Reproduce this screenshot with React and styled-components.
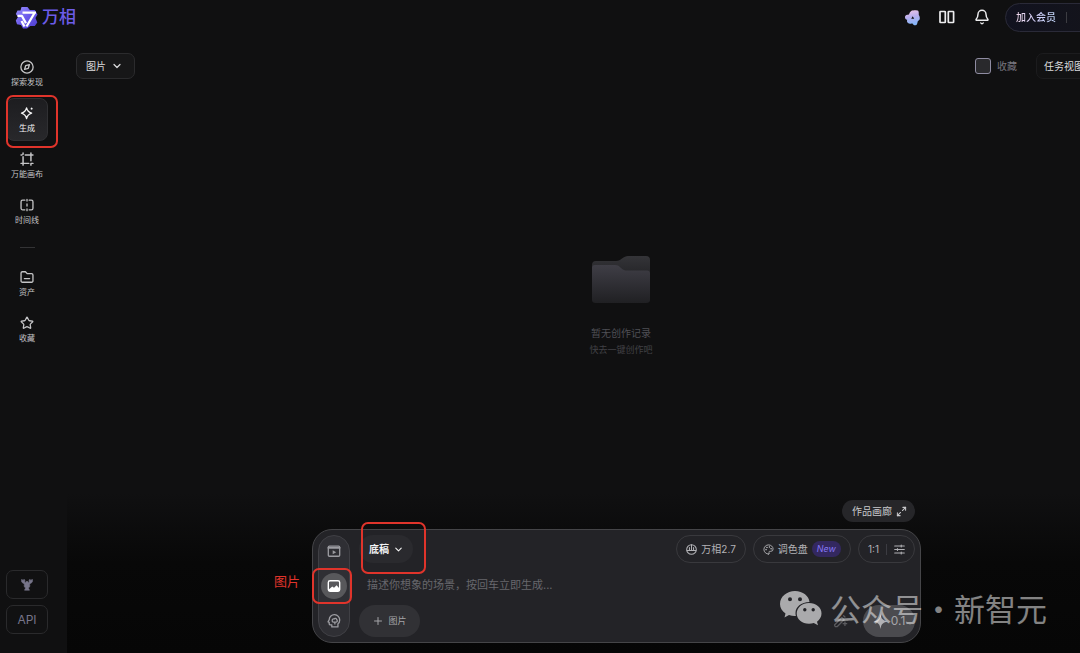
import React from "react";
import styled, { createGlobalStyle, css } from "styled-components";
import { Bell, ChevronDown, Maximize2, Palette, Plus, Star } from "lucide-react";

const Global = createGlobalStyle`
  *, *::before, *::after { box-sizing: border-box; }
  html, body { margin: 0; background: #101011; overflow-x: hidden; }
  body, button, textarea, input {
    font-family: Inter, "Liberation Sans", "Noto Sans CJK SC", sans-serif;
    line-height: 16px;
  }
  button { margin: 0; padding: 0; border: 0; background: none; color: inherit; cursor: pointer; }
  a { color: inherit; text-decoration: none; }
  svg { display: block; flex: none; }
`;

const RED = "#e0342b";

const Page = styled.div`
  position: relative;
  display: flex;
  flex-direction: column;
  min-height: 100vh;
  overflow: hidden;
  background: #101011;
  color: #d6d6d9;
`;

const Header = styled.header`
  display: flex;
  align-items: center;
  justify-content: space-between;
  height: 34px;
  padding-left: 15px;
`;

const Brand = styled.a`
  display: flex;
  align-items: center;
  gap: 4px;
  color: #6c5ce8;
  font-size: 17px;
  line-height: 24px;
  font-weight: 500;
`;

const HeaderActions = styled.div`
  display: flex;
  align-items: center;
  gap: 17px;
  margin-right: -20px;
`;

const IconButton = styled.button`
  display: grid;
  place-items: center;
  width: 18px;
  height: 18px;
  color: #ececee;
`;

const MemberPill = styled.button`
  display: flex;
  align-items: center;
  gap: 10px;
  height: 29px;
  padding: 0 32px 0 10px;
  margin-left: -3px;
  border: 1px solid #2a2a38;
  border-radius: 15px;
  background: linear-gradient(90deg, #11121f, #14141b);
  font-size: 10px;
  font-weight: 500;
  white-space: nowrap;
`;

const MemberText = styled.span`
  background: linear-gradient(90deg, #f0d8ea, #d3d0fb 50%, #c7dcff);
  background-clip: text;
  color: transparent;
`;

const Divider = styled.span`
  width: 1px;
  height: 11px;
  background: #3c3c42;
`;

const Body = styled.div`
  display: flex;
  flex: 1;
`;

const Sidebar = styled.nav`
  display: flex;
  flex-direction: column;
  justify-content: space-between;
  flex: none;
  width: 67px;
  padding: 18px 0 19px 6px;
`;

const NavList = styled.div`
  display: flex;
  flex-direction: column;
  gap: 3px;
  width: 42px;
`;

const NavItem = styled.a`
  position: relative;
  display: flex;
  flex-direction: column;
  align-items: center;
  justify-content: center;
  gap: 3px;
  height: 43px;
  border: 1px solid transparent;
  border-radius: 8px;
  color: #c4c4c6;
  font-size: 8px;
  line-height: 10px;
  white-space: nowrap;
  ${(p) =>
    p.$active &&
    css`
      border-color: #303033;
      background: linear-gradient(#1d1d20, #28282b);
      color: #f4f4f5;
    `}
`;

const NavRule = styled.hr`
  width: 15px;
  height: 1px;
  margin: 11px auto;
  border: 0;
  background: #333335;
`;

const SideButtons = styled.div`
  display: flex;
  flex-direction: column;
  gap: 6px;
  width: 42px;
`;

const SideButton = styled.button`
  display: grid;
  place-items: center;
  height: 29px;
  border: 1px solid #2a2a2c;
  border-radius: 7px;
  background: #111112;
  color: #77758a;
  font-size: 12px;
`;

const Main = styled.main`
  display: flex;
  flex-direction: column;
  flex: 1;
  min-width: 0;
  background: linear-gradient(to top, #060606 0, #080808 90px, #101011 160px);
`;

const Toolbar = styled.div`
  display: flex;
  align-items: center;
  justify-content: space-between;
  padding: 19px 0 0 9px;
  font-size: 10px;
`;

const ToolbarEnd = styled.div`
  display: flex;
  align-items: center;
  gap: 19px;
  margin-right: -21px;
`;

const OutlineButton = styled.button`
  display: flex;
  align-items: center;
  gap: 5px;
  height: 26px;
  padding: ${(p) => (p.$wide ? "0 16px 0 7px" : "0 11px 0 9px")};
  border: 1px solid ${(p) => (p.$wide ? "#1c1c1e" : "#2b2b2d")};
  border-radius: 7px;
  background: ${(p) => (p.$wide ? "#121213" : "#171718")};
  color: #dcdcde;
  font-size: 10px;
  white-space: nowrap;
`;

const CheckLabel = styled.label`
  display: flex;
  align-items: center;
  gap: 6px;
  color: #77757f;
`;

const Checkbox = styled.input`
  appearance: none;
  width: 16px;
  height: 16px;
  margin: 0;
  border: 1px solid #8f8ca2;
  border-radius: 3px;
  background: #29292c;
`;

const Empty = styled.section`
  display: flex;
  flex: 1;
  flex-direction: column;
  align-items: center;
  justify-content: center;
  padding: 32px 0 0 95px;
  color: #4f4f55;
`;

const EmptyTitle = styled.p`
  margin: 20px 0 0;
  font-size: 10px;
  line-height: 16px;
`;

const EmptyHint = styled.p`
  margin: 2px 0 0;
  font-size: 9px;
  line-height: 14px;
  color: #404045;
`;

const Dock = styled.section`
  display: flex;
  flex-direction: column;
  gap: 7px;
  padding: 0 159px 10px 245px;
`;

const GalleryButton = styled.button`
  display: flex;
  align-items: center;
  align-self: flex-end;
  gap: 4px;
  height: 22px;
  margin-right: 6px;
  padding: 0 8px 0 10px;
  border-radius: 11px;
  background: #262629;
  color: #c9c9cc;
  font-size: 10px;
`;

const Composer = styled.div`
  position: relative;
  display: flex;
  gap: 9px;
  padding: 5px;
  border: 1px solid #454548;
  border-radius: 20px;
  background: #232327;
`;

const ModeRail = styled.div`
  display: flex;
  flex-direction: column;
  align-items: center;
  gap: 9px;
  width: 32px;
  padding: 2px 0;
  border: 1px solid #404045;
  border-radius: 16px;
  background: #2f2f34;
`;

const ModeButton = styled.button`
  position: relative;
  display: grid;
  place-items: center;
  width: 26px;
  height: 26px;
  border-radius: 13px;
  background: ${(p) => (p.$active ? "#58585b" : "transparent")};
  color: ${(p) => (p.$active ? "#ffffff" : "#9c9ca1")};
`;

const ComposerBody = styled.div`
  display: flex;
  flex: 1;
  flex-direction: column;
  min-width: 0;
`;

const Row = styled.div`
  display: flex;
  align-items: center;
  justify-content: space-between;
`;

const Chips = styled.div`
  display: flex;
  gap: 7px;
`;

const Chip = styled.button`
  display: flex;
  align-items: center;
  gap: ${(p) => (p.$split ? "7px" : "4px")};
  height: 28px;
  padding: 0 9px;
  border: 1px solid #39393d;
  border-radius: 14px;
  color: #b2b2b6;
  font-size: 10px;
  white-space: nowrap;
`;

const NewBadge = styled.span`
  padding: 0 5px;
  border-radius: 8px;
  background: #33285f;
  color: #8577f5;
  font-size: 9px;
  font-style: italic;
  font-weight: 400;
`;

const DraftButton = styled.button`
  position: relative;
  display: flex;
  align-items: center;
  gap: 4px;
  height: 28px;
  padding: 0 9px 0 10px;
  border-radius: 14px;
  background: #2a2a2e;
  color: #f4f4f5;
  font-size: 10px;
  font-weight: 700;
`;

const Prompt = styled.textarea`
  height: 42px;
  padding: 14px 8px 0;
  border: 0;
  outline: 0;
  resize: none;
  overflow: hidden;
  background: transparent;
  color: #e4e4e6;
  font-size: 11px;
  &::placeholder { color: #67676c; opacity: 1; }
`;

const UploadButton = styled.button`
  display: flex;
  align-items: center;
  justify-content: center;
  gap: 4px;
  width: 61px;
  height: 32px;
  border-radius: 16px;
  background: #313135;
  color: #a4a4a8;
  font-size: 9px;
`;

const SubmitGroup = styled.div`
  display: flex;
  align-items: center;
  gap: 15px;
  color: #5b5b5f;
`;

const SubmitButton = styled.button`
  display: flex;
  align-items: center;
  justify-content: center;
  gap: 3px;
  width: 52px;
  height: 32px;
  border-radius: 16px;
  background: #4b4b4f;
  color: #a6a6a9;
  font-size: 12px;
`;

const Highlight = styled.span`
  position: absolute;
  inset: ${(p) => p.$inset};
  border: 2px solid ${RED};
  border-radius: 7px;
  pointer-events: none;
`;

const Callout = styled.span`
  position: absolute;
  right: 100%;
  top: 42px;
  margin-right: 13px;
  color: ${RED};
  font-size: 13px;
  line-height: 18px;
  white-space: nowrap;
`;

const Watermark = styled.div`
  position: absolute;
  right: 33px;
  bottom: 22px;
  display: flex;
  align-items: center;
  gap: 8px;
  color: rgba(255, 255, 255, 0.5);
  font-family: "Noto Sans CJK SC", sans-serif;
  font-size: 31px;
  line-height: 46px;
  white-space: nowrap;
  pointer-events: none;
`;

const Line = ({ size = 14, width = 1.5, children }) => (
  <svg
    width={size}
    height={size}
    viewBox="0 0 16 16"
    fill="none"
    stroke="currentColor"
    strokeWidth={width}
    strokeLinecap="round"
    strokeLinejoin="round"
    aria-hidden="true"
  >
    {children}
  </svg>
);

const LogoMark = () => (
  <svg width="23" height="23" viewBox="0 0 23 23" aria-hidden="true">
    <defs>
      <linearGradient id="logo" x1="0" y1="0" x2="1" y2="1">
        <stop offset="0" stopColor="#9a90ff" />
        <stop offset="0.5" stopColor="#6a59ea" />
        <stop offset="1" stopColor="#4c3ccc" />
      </linearGradient>
    </defs>
    <path d="M6.500 1h6l2.300 3h5L22.500 8.500l-2 3.500 1.800 4.500-2.500 3.500h-4.500L12 22.500H8L6 19l-4-.8L.8 14.500 3 11 .8 8 2.500 4.500h3z" fill="url(#logo)" />
    <path d="M7.500 6.600h13.500M19.200 7.500L11.500 20.500M2.500 9.800H6.800L11 17.200M6.500 15l3 5.500" fill="none" stroke="#fff" strokeWidth="2.300" strokeLinejoin="round" />
  </svg>
);

const FlowerIcon = () => (
  <svg width="17" height="17" viewBox="0 0 17 17" aria-hidden="true">
    <defs>
      <linearGradient id="petal" x1="0" y1="0" x2="0.2" y2="1">
        <stop offset="0" stopColor="#f2c6e6" />
        <stop offset="0.5" stopColor="#b8aeee" />
        <stop offset="1" stopColor="#86b6f8" />
      </linearGradient>
    </defs>
    <path
      fillRule="evenodd"
      fill="url(#petal)"
      d="M7.500 1.800C9 1 13.500 1 14.200 1.800c.8 1 .5 3.200.6 4.200.9 1 1.200 3 .9 4.200-.5 1.300-1.700 1.500-2 2.200-.3 1.800-.7 3.600-2.200 3.900-1.500.3-2.300-.8-3-1.800-1.800.3-3.700.2-4.800-.8-.9-.9-.8-2-.5-2.900C1.500 10.400.8 9 1 7.700 1.300 6 3 5.500 5 5.400 5.500 4 6.300 2.500 7.500 1.800zM8.700 7.200L7.200 9.800h3z"
    />
  </svg>
);

const CompassIcon = () => (
  <Line>
    <circle cx="8" cy="8" r="7" />
    <path d="M10.800 5.200L9.500 9.500 5.200 10.800 6.500 6.500z" />
  </Line>
);

const SparkIcon = () => (
  <Line>
    <path d="M7.500 2.200c.9 3.700 2 4.900 5.800 6-3.800 1.200-4.900 2.400-5.800 6.100C6.600 10.600 5.500 9.400 1.700 8.200 5.500 7.100 6.600 5.900 7.500 2.200z" />
    <path d="M13.300 2.500v1M12.800 3h1" />
  </Line>
);

const CanvasIcon = () => (
  <Line width={1.7}>
    <path d="M3.500 1v1.500M3.500 5.500V13H10M1.200 3.500h1M6 3.500h6.500V10M1.200 13h2.300v2M12.500 1v2.500h2.300M12.500 13v2M12.500 13h2.300" />
  </Line>
);

const TimelineIcon = () => (
  <Line>
    <path d="M5.500 2.500H3A1.800 1.800 0 0 0 1.200 4.300v7.400A1.800 1.800 0 0 0 3 13.500h2.500M10.500 2.500H13a1.800 1.800 0 0 1 1.800 1.800v7.400a1.800 1.800 0 0 1-1.800 1.800h-2.500M8 1.500v2M8 6.800v2.400M8 12.500v2" />
  </Line>
);

const FolderIcon = () => (
  <Line>
    <path d="M1.200 12.500v-9A1.500 1.500 0 0 1 2.700 2h3.500l2 2.200h5a1.600 1.600 0 0 1 1.600 1.600v6.700a1.500 1.500 0 0 1-1.500 1.500H2.700a1.500 1.500 0 0 1-1.500-1.500zM5 9.800h6" />
  </Line>
);

const BookIcon = () => (
  <Line size={16} width={1.7}>
    <rect x="1" y="2.500" width="5.300" height="11" rx="0.600" />
    <rect x="9.300" y="2.500" width="5.300" height="11" rx="0.600" />
  </Line>
);

const LobsterIcon = () => (
  <svg width="12" height="13" viewBox="0 0 12 13" fill="currentColor" aria-hidden="true">
    <path
      stroke="currentColor"
      strokeWidth="0.6"
      strokeLinejoin="round"
      d="M.8 1.200l1.300 1.300.9-1.200c1 .7 1.200 1.800.7 2.700l.9.800.6-1.300h1.600l.6 1.300.9-.8c-.5-.9-.3-2 .7-2.700l.9 1.200 1.300-1.300c.8 1.600.3 3.300-1.200 3.900L8.300 6.200l.9 1-.9.300.5 1.300-1 .2-.2 1.500.9 1.700H3.500l.9-1.700-.2-1.500-1-.2.5-1.300-.9-.3.9-1L2 5.100C.5 4.500 0 2.800.8 1.200z"
    />
  </svg>
);

const FolderArt = () => (
  <svg width="60" height="50" viewBox="0 0 60 50" aria-hidden="true">
    <defs>
      <linearGradient id="back" x1="0" y1="0" x2="0" y2="1">
        <stop offset="0" stopColor="#343438" />
        <stop offset="1" stopColor="#232326" />
      </linearGradient>
      <linearGradient id="front" x1="0" y1="0" x2="0" y2="1">
        <stop offset="0" stopColor="#3f3e46" />
        <stop offset="1" stopColor="#202023" />
      </linearGradient>
    </defs>
    <path d="M1 10q0-4 4-4h20c3 0 4-1 6-2.500S35 1 37 1h18q4 0 4 4v18H1z" fill="url(#back)" />
    <path d="M1 13q0-3 3-3h20c3 0 4 1 6 3s4 2.500 6 2.500h20q3 0 3 3V45q0 3-4 3H5q-4 0-4-3z" fill="url(#front)" />
  </svg>
);

const VideoIcon = () => (
  <Line size={14}>
    <rect x="1.500" y="2.500" width="13" height="11.500" rx="1.200" />
    <path d="M1.500 4.300h13" strokeWidth="2" />
    <path d="M6.500 7v4.600L10.500 9.300z" fill="currentColor" stroke="none" />
  </Line>
);

const PictureIcon = () => (
  <Line size={14} width={1.6}>
    <rect x="1.500" y="2" width="13" height="12" rx="2" />
    <path d="M2 12l4-3.500 2 1.500L11 7l3.500 4v2l-1 1h-11z" fill="currentColor" stroke="none" />
  </Line>
);

const HeadIcon = () => (
  <Line size={14}>
    <path d="M5.500 14.800v-2.300H4a1.500 1.500 0 0 1-1.500-1.500V9.500L1.200 9l1.300-2.500A6 6 0 0 1 14.500 7c0 2-.8 3.200-2 4.300v3.500z" />
    <path d="M6 7.500a1.500 1.500 0 0 1 2-1.800 1.700 1.700 0 0 1 3 .8 1.500 1.500 0 0 1-.5 2.800H7.300A1.400 1.400 0 0 1 6 7.500zM9 9.300v2" />
  </Line>
);

const ModelIcon = () => (
  <Line size={11}>
    <circle cx="8" cy="8" r="7" />
    <path d="M1.500 9.500h13M8 1v8.500M5 5v4.500M11 5v4.500" />
  </Line>
);

const SlidersIcon = () => (
  <Line size={11} width={1.5}>
    <path d="M1 3h14M1 8h14M1 13h14M10.500 1.500v3M5 6.500v3M10.500 11.500v3" />
  </Line>
);

const WandIcon = () => (
  <Line size={14}>
    <path d="M1.500 14.500l-1-2L9 4l2.500 2.500L3.500 14.500zM11 2l1.500 1.500M12.500 9v4M10.500 11h4" />
  </Line>
);

const StarFill = () => (
  <svg width="15" height="15" viewBox="0 0 16 16" fill="#b2b2b5" aria-hidden="true">
    <path d="M8 0c.8 5 2 6.800 7.500 8C10 9.200 8.800 11 8 16 7.200 11 6 9.200.5 8 6 6.800 7.200 5 8 0z" />
  </svg>
);

const WeChatIcon = () => (
  <svg width="42" height="35" viewBox="0 0 42 35" fill="#aaaaac" aria-hidden="true">
    <path
      fillRule="evenodd"
      d="M15 0C23 0 29 5 29.500 11 21 11 15.500 16 15.500 22c0 1 .1 2 .4 3-2.500.2-4.500-.2-6.900-.9L4.500 26.500l1-4C2 20 0 17 0 13 0 5.500 7 0 15 0zM10 6.200a2 2 0 1 0 0 4 2 2 0 0 0 0-4zm10 0a2 2 0 1 0 0 4 2 2 0 0 0 0-4z"
    />
    <path
      fillRule="evenodd"
      d="M29 12c7 0 12.500 4.600 12.500 10.500 0 3.500-1.800 6-4.500 8.200l1 3.500-4.200-2.100c-1.600.4-3 .7-4.800.7-7 0-12.300-4.500-12.300-10.300S22 12 29 12zM24.800 17a1.700 1.700 0 1 0 0 3.400 1.700 1.700 0 0 0 0-3.400zm8.400 0a1.700 1.700 0 1 0 0 3.400 1.700 1.700 0 0 0 0-3.400z"
    />
  </svg>
);

const NAV_TOP = [
  { label: "探索发现", Icon: CompassIcon },
  { label: "生成", Icon: SparkIcon, active: true },
  { label: "万能画布", Icon: CanvasIcon },
  { label: "时间线", Icon: TimelineIcon },
];

const StarIcon = () => <Star size={14} strokeWidth={2.2} />;

const NAV_BOTTOM = [
  { label: "资产", Icon: FolderIcon },
  { label: "收藏", Icon: StarIcon },
];

const NavEntry = ({ label, Icon, active }) => (
  <NavItem href="#" $active={active} aria-current={active ? "page" : undefined}>
    <Icon />
    {label}
    {active && <Highlight $inset="-4px -11px -8px -1px" />}
  </NavItem>
);

export default function App() {
  return (
    <Page>
      <Global />
      <Header>
        <Brand href="#">
          <LogoMark />
          万相
        </Brand>
        <HeaderActions>
          <IconButton aria-label="灵感"><FlowerIcon /></IconButton>
          <IconButton aria-label="教程"><BookIcon /></IconButton>
          <IconButton aria-label="通知"><Bell size={16} strokeWidth={2.2} /></IconButton>
          <MemberPill>
            <MemberText>加入会员</MemberText>
            <Divider />
          </MemberPill>
        </HeaderActions>
      </Header>

      <Body>
        <Sidebar>
          <NavList>
            {NAV_TOP.map((item) => <NavEntry key={item.label} {...item} />)}
            <NavRule />
            {NAV_BOTTOM.map((item) => <NavEntry key={item.label} {...item} />)}
          </NavList>
          <SideButtons>
            <SideButton aria-label="助手"><LobsterIcon /></SideButton>
            <SideButton>API</SideButton>
          </SideButtons>
        </Sidebar>

        <Main>
          <Toolbar>
            <OutlineButton>图片<ChevronDown size={12} strokeWidth={2.4} /></OutlineButton>
            <ToolbarEnd>
              <CheckLabel><Checkbox type="checkbox" />收藏</CheckLabel>
              <OutlineButton $wide>任务视图</OutlineButton>
            </ToolbarEnd>
          </Toolbar>

          <Empty>
            <FolderArt />
            <EmptyTitle>暂无创作记录</EmptyTitle>
            <EmptyHint>快去一键创作吧</EmptyHint>
          </Empty>

          <Dock>
            <GalleryButton>作品画廊<Maximize2 size={11} strokeWidth={2.2} /></GalleryButton>
            <Composer>
              <Callout>图片</Callout>
              <ModeRail>
                <ModeButton aria-label="视频"><VideoIcon /></ModeButton>
                <ModeButton aria-label="图片" $active>
                  <PictureIcon />
                  <Highlight $inset="-5px -5px -5px -9px" />
                </ModeButton>
                <ModeButton aria-label="数字人"><HeadIcon /></ModeButton>
              </ModeRail>
              <ComposerBody>
                <Row>
                  <DraftButton>
                    底稿<ChevronDown size={11} strokeWidth={2.4} />
                    <Highlight $inset="-13px -13px -11px 2px" />
                  </DraftButton>
                  <Chips>
                    <Chip><ModelIcon />万相2.7</Chip>
                    <Chip><Palette size={11} />调色盘<NewBadge>New</NewBadge></Chip>
                    <Chip $split>1:1<Divider /><SlidersIcon /></Chip>
                  </Chips>
                </Row>
                <Prompt aria-label="描述" placeholder="描述你想象的场景，按回车立即生成..." />
                <Row>
                  <UploadButton><Plus size={12} />图片</UploadButton>
                  <SubmitGroup>
                    <WandIcon />
                    <SubmitButton><StarFill />0.1</SubmitButton>
                  </SubmitGroup>
                </Row>
              </ComposerBody>
            </Composer>
          </Dock>
        </Main>
      </Body>

      <Watermark>
        <WeChatIcon />
        公众号·新智元
      </Watermark>
    </Page>
  );
}
